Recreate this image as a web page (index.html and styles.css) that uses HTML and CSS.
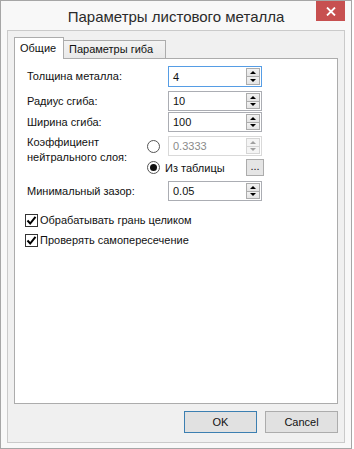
FILE: index.html
```html
<!DOCTYPE html>
<html lang="ru">
<head>
<meta charset="utf-8">
<title>Параметры листового металла</title>
<link rel="stylesheet" href="styles.css">
</head>
<body>
<div class="window">
  <div class="titlebar">
    <span class="spacer"></span>
    <span class="title">Параметры листового металла</span>
    <span class="close"><svg width="10" height="9" viewBox="0 0 10 9"><path d="M1 0.5 L9 8.5 M9 0.5 L1 8.5" stroke="#fff" stroke-width="1.8" fill="none"/></svg></span>
  </div>
  <div class="client">
    <div class="tabs">
      <div class="tab active">Общие</div>
      <div class="tab second">Параметры гиба</div>
    </div>
    <div class="panel">
      <div class="row r1">
        <span class="lbl">Толщина металла:</span>
        <span class="rcell"></span>
        <div class="spin focused"><span class="val">4</span><span class="arrows"><span class="up"></span><span class="down"></span></span></div>
      </div>
      <div class="row r2">
        <span class="lbl">Радиус сгиба:</span>
        <span class="rcell"></span>
        <div class="spin"><span class="val">10</span><span class="arrows"><span class="up"></span><span class="down"></span></span></div>
      </div>
      <div class="row r3">
        <span class="lbl">Ширина сгиба:</span>
        <span class="rcell"></span>
        <div class="spin"><span class="val">100</span><span class="arrows"><span class="up"></span><span class="down"></span></span></div>
      </div>
      <div class="row r4">
        <span class="lbl two">Коэффициент<br>нейтрального слоя:</span>
        <span class="rcell"><span class="radio"></span></span>
        <div class="spin disabled"><span class="val">0.3333</span><span class="arrows"><span class="up"></span><span class="down"></span></span></div>
      </div>
      <div class="row r5">
        <span class="lbl"></span>
        <div class="radiorow">
          <span class="radiolabel"><span class="radio checked"></span>Из таблицы</span>
          <span class="dots">...</span>
        </div>
      </div>
      <div class="row r6">
        <span class="lbl">Минимальный зазор:</span>
        <span class="rcell"></span>
        <div class="spin"><span class="val">0.05</span><span class="arrows"><span class="up"></span><span class="down"></span></span></div>
      </div>
      <div class="check c1"><span class="box"><svg width="11" height="11" viewBox="0 0 11 11"><path d="M1.5 5.5 L4.2 8.5 L9.5 1.8" stroke="#000" stroke-width="2" fill="none"/></svg></span>Обрабатывать грань целиком</div>
      <div class="check c2"><span class="box"><svg width="11" height="11" viewBox="0 0 11 11"><path d="M1.5 5.5 L4.2 8.5 L9.5 1.8" stroke="#000" stroke-width="2" fill="none"/></svg></span>Проверять самопересечение</div>
    </div>
    <div class="buttons">
      <span class="btn default">OK</span>
      <span class="btn">Cancel</span>
    </div>
  </div>
</div>
</body>
</html>
```
FILE: styles.css
```css
* { box-sizing: border-box; }
html, body { margin: 0; padding: 0; }
body {
  width: 354px;
  height: 449px;
  overflow: hidden;
  background: #ffffff;
  font-family: "Liberation Sans", Arial, sans-serif;
  font-size: 11px;
  color: #111;
}
.window {
  width: 352px;
  height: 449px;
  border: 1px solid #a6a6a6;
  background: #f8f8f8;
  padding: 0 6px 5px 6px;
  display: flex;
  flex-direction: column;
}
.titlebar {
  height: 29px;
  display: grid;
  grid-template-columns: 29px 1fr 29px;
  align-items: start;
}
.title {
  font-size: 15px;
  color: #2b2b2b;
  text-align: center;
  line-height: 20px;
  padding-top: 6px;
  white-space: nowrap;
}
.close {
  width: 29px;
  height: 20px;
  background: #c75050;
  display: flex;
  align-items: center;
  justify-content: center;
}
.client {
  flex: 1;
  border: 1px solid #cacaca;
  background: #f0f0f0;
  padding: 6px 6px 8px 6px;
  display: flex;
  flex-direction: column;
}
.tabs {
  display: flex;
  align-items: flex-end;
  height: 21px;
  position: relative;
  z-index: 1;
}
.tab {
  height: 18px;
  border: 1px solid #acacac;
  border-bottom: none;
  background: linear-gradient(#f3f3f3, #e9e9e9);
  padding: 0 5px;
  line-height: 17px;
  margin-left: -1px;
  white-space: nowrap;
}
.tab.second { width: 103px; }
.tab.active {
  height: 22px;
  margin-left: 0;
  margin-bottom: -1px;
  width: 50px;
  background: #fff;
  position: relative;
  z-index: 2;
  line-height: 21px;
}
.panel {
  height: 346px;
  border: 1px solid #acacac;
  background: #fff;
  padding: 7px 12px 0 12px;
  display: flex;
  flex-direction: column;
}
.row {
  display: flex;
  align-items: center;
  height: 20px;
}
.r1 { height: 21px; }
.r2 { margin-top: 4px; }
.r3 { margin-top: 1px; }
.r4 { margin-top: 4px; }
.r5 { margin-top: 3px; height: 17px; }
.r6 { margin-top: 5px; }
.lbl {
  width: 120px;
  flex: none;
  line-height: 15px;
  white-space: nowrap;
}
.lbl.two {
  align-self: flex-start;
  margin-top: -1px;
  height: 20px;
}
.rcell {
  width: 21px;
  flex: none;
  display: flex;
  align-items: center;
}
.radio {
  width: 13px;
  height: 13px;
  border: 1px solid #555;
  border-radius: 50%;
  background: #fff;
  display: inline-flex;
  align-items: center;
  justify-content: center;
  flex: none;
}
.radio.checked::after {
  content: "";
  width: 7px;
  height: 7px;
  border-radius: 50%;
  background: #111;
}
.radiorow {
  width: 116px;
  display: flex;
  align-items: center;
  justify-content: space-between;
}
.radiolabel {
  display: flex;
  align-items: center;
  gap: 5px;
}
.dots {
  width: 18px;
  height: 17px;
  border: 1px solid #acacac;
  background: #e5e5e5;
  text-align: center;
  line-height: 13px;
  font-size: 11px;
  margin-right: -1px;
}
.spin {
  width: 94px;
  height: 100%;
  border: 1px solid #abadb3;
  background: #fff;
  display: flex;
  align-items: stretch;
  padding: 1px;
}
.spin.focused { border-color: #569de5; }
.spin.disabled { border-color: #d9d9d9; color: #8a8a8a; }
.val {
  flex: 1;
  padding-left: 3px;
  display: flex;
  align-items: center;
}
.arrows {
  width: 14px;
  display: flex;
  flex-direction: column;
}
.up, .down {
  flex: 1;
  border: 1px solid #acacac;
  background: linear-gradient(#f2f2f2, #e4e4e4);
  display: flex;
  align-items: center;
  justify-content: center;
}
.down { border-top: none; }
.up::after {
  content: "";
  border-left: 3px solid transparent;
  border-right: 3px solid transparent;
  border-bottom: 3px solid #000;
}
.down::after {
  content: "";
  border-left: 3px solid transparent;
  border-right: 3px solid transparent;
  border-top: 3px solid #000;
}
.disabled .up, .disabled .down { border-color: #d5d5d5; background: #f4f4f4; }
.disabled .up::after { border-bottom-color: #a0a0a0; }
.disabled .down::after { border-top-color: #a0a0a0; }
.check {
  display: flex;
  align-items: center;
  gap: 2px;
  height: 14px;
  margin-left: -2px;
}
.c1 { margin-top: 12px; }
.c2 { margin-top: 6px; }
.box {
  width: 13px;
  height: 13px;
  border: 1px solid #333;
  background: #fff;
  display: flex;
  align-items: center;
  justify-content: center;
}
.buttons {
  display: flex;
  justify-content: flex-end;
  gap: 8px;
  margin-top: 7px;
}
.btn {
  width: 73px;
  height: 22px;
  border: 1px solid #acacac;
  background: #e1e1e1;
  display: flex;
  align-items: center;
  justify-content: center;
}
.btn.default { border-color: #3c7fb1; }
```
